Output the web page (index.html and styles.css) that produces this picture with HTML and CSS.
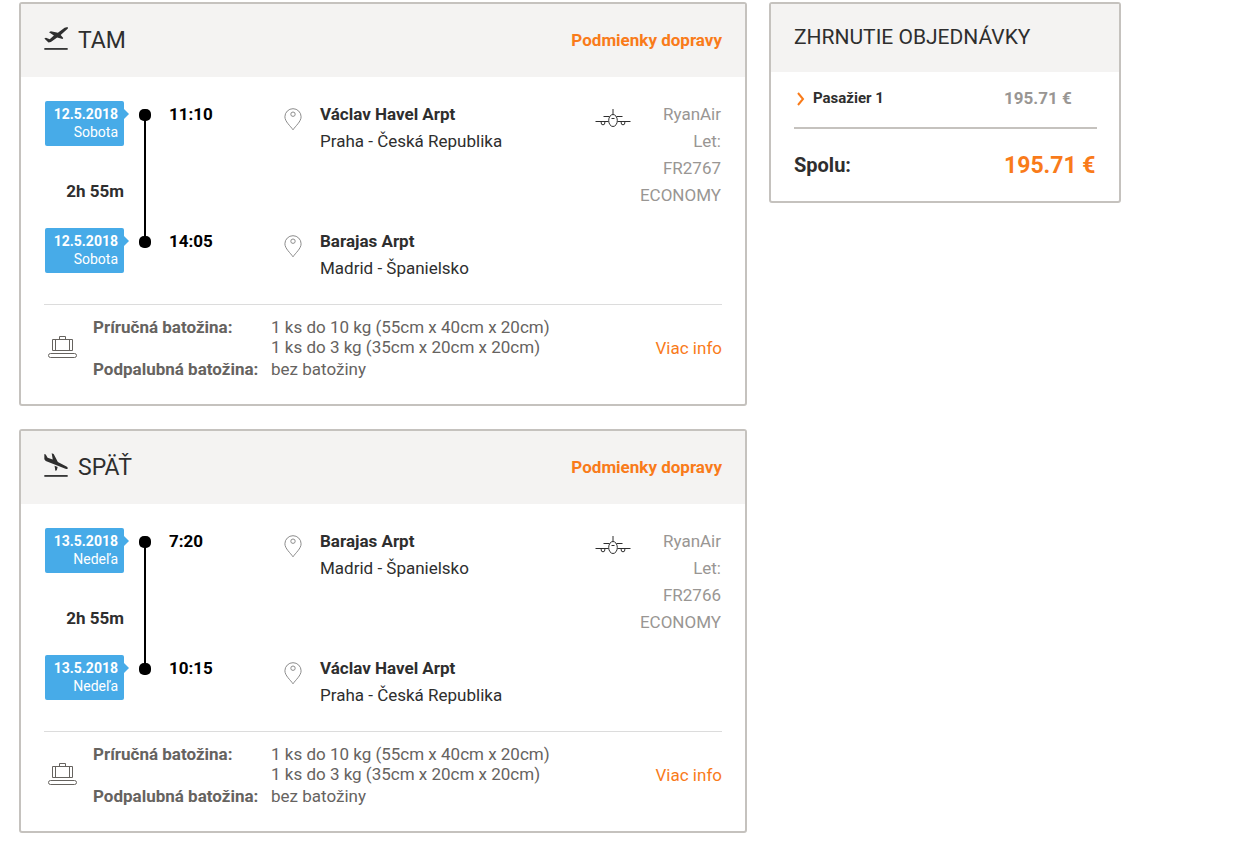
FILE: index.html
```html
<!DOCTYPE html>
<html lang="sk">
<head>
  <meta charset="UTF-8">
  <meta name="viewport" content="width=device-width, initial-scale=1.0">
  <title>Zhrnutie objednávky</title>
  <link rel="stylesheet" href="styles.css">
</head>
<body>
<!-- shared icons -->
<svg class="sprite" aria-hidden="true">
  <symbol id="takeoff" viewBox="0 0 24 24">
    <path d="M2 18.900h20v1.500H2z"/>
    <path d="M22 .8l-2.600.6-5.800 4.400-6-1.300-1.600.8 4.200 2.900-3.600 3.200-3.200-1.400-1.400.8 3.600 3.400 2-.5 5.400-3.900 4.600 1.400.6-1-2.200-2.400L22.200 2.200z"/>
  </symbol>
  <symbol id="land" viewBox="0 0 24 24">
    <path d="M2 18.900h20v1.500H2z"/>
    <path d="M2 .8l1.200.5 1.600 2.800 4.400 1.500L8.300.2l1.700.6 3.600 6.900 7 3.600c1.200.6 1.600 1.200 1.400 1.900-.2.500-.9.600-1.900.2L3.200 6.800 2 5.400z"/>
    <path d="M10.800 11l2.600 1.100-.7 2.600-1.300.6z"/>
  </symbol>
  <symbol id="pin" viewBox="0 0 18 23">
    <path d="M9 21.800C6.500 18 .9 13.600.9 8.800a8.100 8.100 0 0 1 16.200 0c0 4.800-5.600 9.200-8.100 13z"/>
    <circle cx="9" cy="6.200" r="2.200"/>
  </symbol>
  <symbol id="plane" viewBox="0 0 36 18">
    <ellipse cx="18" cy="11.500" rx="4.300" ry="6"/>
    <path d="M18 0v5.500M8.500 7.500h6M21.500 7.500h6M.5 12.500h13M22.500 12.500h13M16.500 9.500h3"/>
    <path d="M6.200 12.500v1.500a1.800 1.800 0 0 0 3.600 0v-1.500M26.200 12.500v1.500a1.800 1.800 0 0 0 3.600 0v-1.500"/>
  </symbol>
  <symbol id="bag" viewBox="0 0 29 24">
    <path d="M11.500 4.500v-3h6v3M4.500 4.500h20v11h-20zM7.500 4.500v11M21.500 4.500v11"/>
    <rect x=".5" y="18.500" width="28" height="4" rx="2"/>
  </symbol>
</svg>

<div class="container">
  <main class="flights">
    <section class="card">
      <header class="card_header">
        <h2><svg class="icon_direction"><use href="#takeoff"/></svg>TAM</h2>
        <a href="#" class="terms">Podmienky dopravy</a>
      </header>
      <div class="card_body">
        <div class="flight">
          <div class="route">
            <div class="when">
              <div class="date"><b>12.5.2018</b>Sobota</div>
              <div class="duration">2h 55m</div>
            </div>
            <div class="timeline"></div>
            <div class="time">11:10</div>
            <svg class="icon_pin"><use href="#pin"/></svg>
            <div class="place"><b>Václav Havel Arpt</b><br>Praha - Česká Republika</div>

            <div class="when">
              <div class="date"><b>12.5.2018</b>Sobota</div>
            </div>
            <div class="time">14:05</div>
            <svg class="icon_pin"><use href="#pin"/></svg>
            <div class="place"><b>Barajas Arpt</b><br>Madrid - Španielsko</div>
          </div>
          <svg class="icon_plane"><use href="#plane"/></svg>
          <div class="airline">RyanAir<br>Let:<br>FR2767<br>ECONOMY</div>
        </div>
        <div class="baggage">
          <svg class="icon_bag"><use href="#bag"/></svg>
          <table>
            <tr>
              <th scope="row">Príručná batožina:</th>
              <td>1 ks do 10 kg (55cm x 40cm x 20cm)<br>1 ks do 3 kg (35cm x 20cm x 20cm)</td>
            </tr>
            <tr>
              <th scope="row">Podpalubná batožina:</th>
              <td>bez batožiny</td>
            </tr>
          </table>
          <a href="#" class="more">Viac info</a>
        </div>
      </div>
    </section>

    <section class="card">
      <header class="card_header">
        <h2><svg class="icon_direction"><use href="#land"/></svg>SPÄŤ</h2>
        <a href="#" class="terms">Podmienky dopravy</a>
      </header>
      <div class="card_body">
        <div class="flight">
          <div class="route">
            <div class="when">
              <div class="date"><b>13.5.2018</b>Nedeľa</div>
              <div class="duration">2h 55m</div>
            </div>
            <div class="timeline"></div>
            <div class="time">7:20</div>
            <svg class="icon_pin"><use href="#pin"/></svg>
            <div class="place"><b>Barajas Arpt</b><br>Madrid - Španielsko</div>

            <div class="when">
              <div class="date"><b>13.5.2018</b>Nedeľa</div>
            </div>
            <div class="time">10:15</div>
            <svg class="icon_pin"><use href="#pin"/></svg>
            <div class="place"><b>Václav Havel Arpt</b><br>Praha - Česká Republika</div>
          </div>
          <svg class="icon_plane"><use href="#plane"/></svg>
          <div class="airline">RyanAir<br>Let:<br>FR2766<br>ECONOMY</div>
        </div>
        <div class="baggage">
          <svg class="icon_bag"><use href="#bag"/></svg>
          <table>
            <tr>
              <th scope="row">Príručná batožina:</th>
              <td>1 ks do 10 kg (55cm x 40cm x 20cm)<br>1 ks do 3 kg (35cm x 20cm x 20cm)</td>
            </tr>
            <tr>
              <th scope="row">Podpalubná batožina:</th>
              <td>bez batožiny</td>
            </tr>
          </table>
          <a href="#" class="more">Viac info</a>
        </div>
      </div>
    </section>
  </main>

  <aside class="card summary">
    <header class="card_header">
      <h3>ZHRNUTIE OBJEDNÁVKY</h3>
    </header>
    <div class="card_body">
      <div class="summary_row passenger">
        <button type="button"><svg viewBox="0 0 8 14"><path d="M1 1l5 6-5 6"/></svg>Pasažier 1</button>
        <span class="price">195.71 €</span>
      </div>
      <div class="summary_row total">
        <span>Spolu:</span>
        <span class="price">195.71 €</span>
      </div>
    </div>
  </aside>
</div>
</body>
</html>
```
FILE: styles.css
```css
* {
    box-sizing: border-box;
}
body {
    margin: 0;
    background: #fff;
    color: #2e2e2e;
    font-family: Roboto, "Liberation Sans", sans-serif;
    font-size: 17px;
    line-height: 27px;
}
a {
    color: #f97b1a;
    text-decoration: none;
}
a:hover {
    text-decoration: underline;
}
b {
    font-weight: 700;
}
svg {
    display: block;
    flex: none;
}
.sprite {
    position: absolute;
    width: 0;
    height: 0;
}

.container {
    display: grid;
    grid-template-columns: minmax(0, 1fr) 352px;
    gap: 22px;
    align-items: start;
    max-width: 1121px;
    padding: 2px 0 18px 19px;
}
.flights {
    display: grid;
    gap: 23px;
}

/* card */
.card {
    border: 2px solid #c5c2be;
    border-radius: 3px;
}
.card_header {
    display: flex;
    align-items: center;
    justify-content: space-between;
    padding: 22px 23px 23px;
    background: #f4f3f2;
}
.card_header h2,
.card_header h3 {
    display: flex;
    align-items: center;
    margin: 0;
    font-weight: 400;
}
.card_header h2 {
    font-size: 23px;
}
.card_header h3 {
    font-size: 21px;
}
.card_body {
    padding: 24px 23px;
}
.icon_direction {
    width: 28px;
    height: 28px;
    margin: 0 8px 0 -2px;
    fill: #2e2e2e;
}
.terms {
    font-weight: 700;
}

/* route */
.flight {
    display: flex;
    padding: 0 1px 22px;
}
.route {
    display: grid;
    grid-template-columns: 79px 45px 115px 36px 1fr;
    row-gap: 23px;
    flex: 1;
}
.date {
    position: relative;
    padding: 4px 6px 5px;
    border-radius: 2px;
    background: #47abe8;
    color: #fff;
    font-size: 14px;
    line-height: 18px;
    text-align: right;
}
.date b {
    display: block;
}
.date::after { /* arrow */
    content: "";
    position: absolute;
    top: 8px;
    left: 100%;
    border: 5px solid transparent;
    border-left-color: #47abe8;
    border-right: 0;
}
.duration {
    margin-top: 32px;
    font-weight: 700;
    text-align: right;
}
.timeline {
    grid-column: 2;
    grid-row: 1 / 3;
    display: flex;
    flex-direction: column;
    align-items: center;
    justify-content: space-between;
    width: 12px;
    margin: 8px 0 34px 15px;
    background: linear-gradient(#000, #000) center / 2px 100% no-repeat;
}
.timeline::before,
.timeline::after {
    content: "";
    width: 12px;
    height: 12px;
    border-radius: 5px;
    background: #000;
}
.when {
    grid-column: 1;
}
.time {
    grid-column: 3;
    color: #000;
    font-weight: 700;
}
.icon_pin {
    width: 18px;
    height: 23px;
    margin-top: 7px;
    fill: none;
    stroke: #8c8c8c;
}
.icon_plane {
    width: 36px;
    height: 18px;
    margin-top: 8px;
    fill: none;
    stroke: #2e2e2e;
}
.airline {
    width: 90px;
    color: #999693;
    text-align: right;
}

/* baggage */
.baggage {
    display: flex;
    align-items: center;
    padding-top: 11px;
    border-top: 1px solid #dcdcdc;
    color: #66635f;
    line-height: 20px;
}
.icon_bag {
    width: 29px;
    height: 24px;
    margin: 0 16px 2px 4px;
    fill: none;
    stroke: #66635f;
}
.baggage table {
    border-collapse: collapse;
}
.baggage th,
.baggage td {
    padding: 1px 0;
    text-align: left;
    vertical-align: top;
}
.baggage th {
    width: 178px;
    font-weight: 700;
    white-space: nowrap;
}
.more {
    margin-left: auto;
}

/* summary */
.summary .card_header {
    padding: 20px 23px 21px;
}
.summary .card_body {
    padding: 13px 22px 22px 23px;
}
.summary_row {
    display: grid;
    grid-template-columns: 1fr 93px;
    align-items: center;
    font-weight: 700;
}
.passenger {
    padding-bottom: 15px;
    border-bottom: 2px solid #c5c2be;
}
.passenger button {
    display: flex;
    align-items: center;
    padding: 0 0 0 3px;
    border: 0;
    background: none;
    color: #2e2e2e;
    font: inherit;
    font-size: 15px;
    cursor: pointer;
}
.passenger svg {
    width: 8px;
    height: 14px;
    margin-right: 8px;
    fill: none;
    stroke: #f97b1a;
    stroke-width: 2;
}
.passenger .price {
    color: #999693;
}
.total {
    padding-top: 23px;
    font-size: 20px;
}
.total .price {
    color: #f97b1a;
    font-size: 23px;
    white-space: nowrap;
}
```
